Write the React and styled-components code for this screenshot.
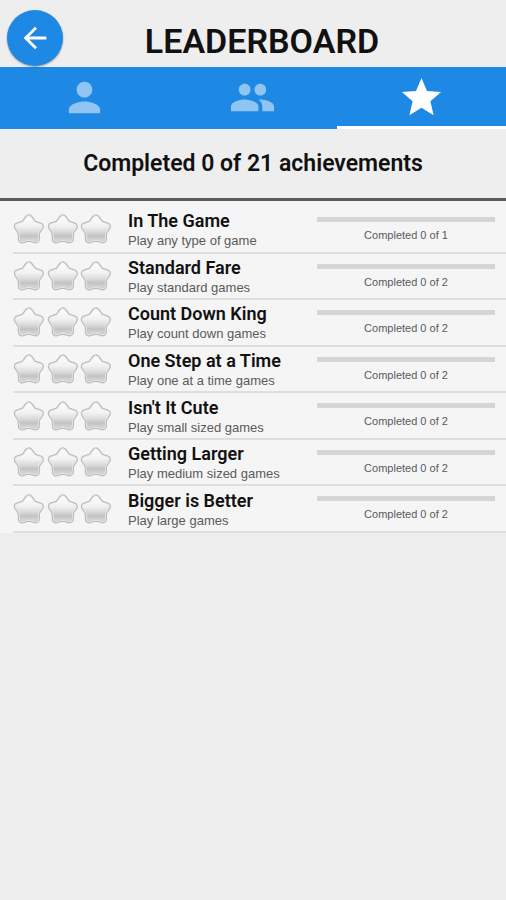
import React, { useState } from "react";
import styled, { createGlobalStyle } from "styled-components";
import { MdArrowBack, MdGroup, MdPerson, MdStar } from "react-icons/md";

const GlobalStyle = createGlobalStyle`
  * {
    box-sizing: border-box;
  }
  body {
    margin: 0;
    background: #eeeeee;
    color: #111;
    font-family: Roboto, sans-serif;
  }
  h1, h2, h3, p, ul {
    margin: 0;
    padding: 0;
  }
`;

const Header = styled.header`
  display: grid;
  grid-template-columns: 56px 1fr 56px;
  align-items: center;
  height: 67px;
  padding: 9px 7px 0;
  h1 {
    padding: 5px 0 0 18px;
    font: 600 34px/40px Roboto, sans-serif;
    text-align: center;
  }
`;

const BackButton = styled.button`
  display: flex;
  align-items: center;
  justify-content: center;
  width: 56px;
  height: 56px;
  padding: 0;
  border: 0;
  border-radius: 50%;
  background: #1e88e5;
  color: #fff;
  font-size: 34px;
  box-shadow: 0 1px 2px rgba(0, 0, 0, 0.35);
  cursor: pointer;
`;

const Tabs = styled.nav`
  display: grid;
  grid-template-columns: repeat(3, 1fr);
  background: #1e88e5;
`;

const Tab = styled.button`
  display: flex;
  align-items: center;
  justify-content: center;
  height: 62px;
  padding: 2px 0 0;
  border: 0;
  border-bottom: 3px solid ${({ $active }) => ($active ? "#fff" : "transparent")};
  background: none;
  color: ${({ $active }) => ($active ? "#fff" : "#90c4f2")};
  font-size: 47px;
  cursor: pointer;
`;

const Summary = styled.h2`
  padding: 19px 0 18px;
  border-bottom: 3px solid #5c5c5c;
  font: 600 23px/32px Roboto, sans-serif;
  text-align: center;
`;

const List = styled.ul`
  display: grid;
  grid-auto-rows: 1fr;
  min-height: 332px;
  padding: 6px 0 0 13px;
  background: #f5f5f5;
  list-style: none;
`;

const Item = styled.li`
  display: grid;
  grid-template-columns: 99px 1fr 178px;
  column-gap: 16px;
  align-items: center;
  padding-right: 11px;
  border-bottom: 2px solid #dedede;
`;

const Stars = styled.div`
  display: flex;
  gap: 2px;
  svg {
    width: 32px;
    height: 32px;
  }
`;

const ItemText = styled.div`
  padding-top: 2px;
  white-space: nowrap;
  h3 {
    font: 600 18px/22px Roboto, sans-serif;
  }
  p {
    font: 400 13px/18px "Liberation Sans", sans-serif;
    color: #5a5a5a;
  }
`;

const Progress = styled.div`
  align-self: start;
  padding-top: 10px;
  text-align: center;
  label {
    display: block;
    padding-top: 6px;
    font: 400 11px/14px "Liberation Sans", sans-serif;
    color: #5a5a5a;
  }
  progress {
    display: block;
    width: 100%;
    height: 5px;
    border: 0;
    appearance: none;
    background: #d5d5d5;
    &::-webkit-progress-bar {
      background: #d5d5d5;
    }
    &::-webkit-progress-value {
      background: #1e88e5;
    }
  }
`;

const TABS = [
  { id: "player", label: "My scores", Icon: MdPerson },
  { id: "friends", label: "Friends", Icon: MdGroup },
  { id: "achievements", label: "Achievements", Icon: MdStar },
];

const ACHIEVEMENTS = [
  { name: "In The Game", detail: "Play any type of game", total: 1 },
  { name: "Standard Fare", detail: "Play standard games", total: 2 },
  { name: "Count Down King", detail: "Play count down games", total: 2 },
  { name: "One Step at a Time", detail: "Play one at a time games", total: 2 },
  { name: "Isn't It Cute", detail: "Play small sized games", total: 2 },
  { name: "Getting Larger", detail: "Play medium sized games", total: 2 },
  { name: "Bigger is Better", detail: "Play large games", total: 2 },
];

const STAR =
  "M16 5.500L20.300 11.200L26.900 13.400L23.100 19.300L22.800 26.300L16 24.300L9.200 26.300L8.900 19.300L5.100 13.400L11.700 11.200Z";

// wide round-joined strokes give the star its soft corners and double rim
const SilverStar = () => (
  <svg viewBox="0 0 32 32" strokeLinejoin="round" aria-hidden="true">
    <path d={STAR} fill="none" stroke="#b9b9b9" strokeWidth="8.6" />
    <path d={STAR} fill="none" stroke="#e6e6e6" strokeWidth="6.4" />
    <path d={STAR} fill="url(#silver)" stroke="url(#silver)" strokeWidth="4.6" />
  </svg>
);

const Achievement = ({ id, name, detail, total }) => (
  <Item>
    <Stars>
      <SilverStar />
      <SilverStar />
      <SilverStar />
    </Stars>
    <ItemText>
      <h3>{name}</h3>
      <p>{detail}</p>
    </ItemText>
    <Progress>
      <progress id={id} value={0} max={total} />
      <label htmlFor={id}>Completed 0 of {total}</label>
    </Progress>
  </Item>
);

const App = () => {
  const [tab, setTab] = useState("achievements");
  return (
    <>
      <GlobalStyle />
      <svg width="0" height="0" style={{ display: "block" }} aria-hidden="true">
        <linearGradient id="silver" x1="0" y1="0" x2="0" y2="1">
          <stop offset="0" stopColor="#fafafa" />
          <stop offset="0.35" stopColor="#f2f2f2" />
          <stop offset="0.65" stopColor="#dadada" />
          <stop offset="0.85" stopColor="#c2c2c2" />
          <stop offset="1" stopColor="#d2d2d2" />
        </linearGradient>
      </svg>
      <Header>
        <BackButton aria-label="Back">
          <MdArrowBack />
        </BackButton>
        <h1>LEADERBOARD</h1>
      </Header>
      <Tabs>
        {TABS.map(({ id, label, Icon }) => (
          <Tab key={id} aria-label={label} $active={id === tab} onClick={() => setTab(id)}>
            <Icon />
          </Tab>
        ))}
      </Tabs>
      <Summary>Completed 0 of 21 achievements</Summary>
      <List>
        {ACHIEVEMENTS.map((item, i) => (
          <Achievement key={item.name} id={`progress-${i}`} {...item} />
        ))}
      </List>
    </>
  );
};

export default App;
